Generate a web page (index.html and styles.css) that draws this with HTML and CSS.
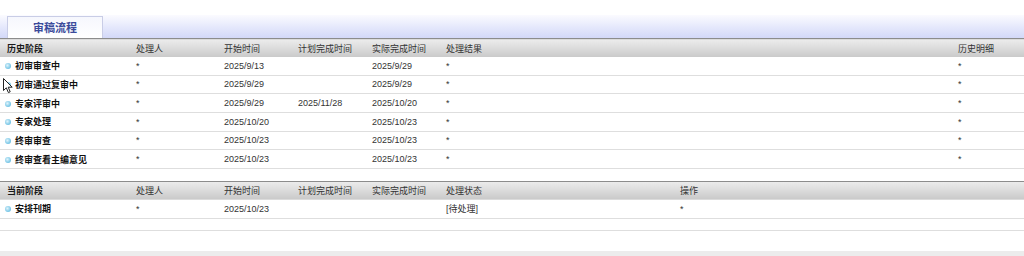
FILE: index.html
```html
<!DOCTYPE html>
<html lang="zh-CN">
<head>
    <meta charset="UTF-8">
    <title>审稿流程</title>
    <link rel="stylesheet" href="styles.css">
</head>
<body>
    <!-- 页签 -->
    <div class="tab-bar">
        <div class="tab">审稿流程</div>
    </div>

    <!-- 历史阶段 -->
    <table class="flow-table">
        <colgroup>
            <col style="width:136px"><col style="width:88px"><col style="width:74px"><col style="width:74px"><col style="width:74px"><col style="width:512px"><col>
        </colgroup>
        <thead>
            <tr>
                <th class="stage-head">历史阶段</th>
                <th>处理人</th>
                <th>开始时间</th>
                <th>计划完成时间</th>
                <th>实际完成时间</th>
                <th>处理结果</th>
                <th>历史明细</th>
            </tr>
        </thead>
        <tbody>
            <tr>
                <td class="stage"><span class="dot"></span>初审审查中</td>
                <td>*</td><td>2025/9/13</td><td></td><td>2025/9/29</td><td>*</td><td>*</td>
            </tr>
            <tr>
                <td class="stage"><span class="dot"></span>初审通过复审中</td>
                <td>*</td><td>2025/9/29</td><td></td><td>2025/9/29</td><td>*</td><td>*</td>
            </tr>
            <tr>
                <td class="stage"><span class="dot"></span>专家评审中</td>
                <td>*</td><td>2025/9/29</td><td>2025/11/28</td><td>2025/10/20</td><td>*</td><td>*</td>
            </tr>
            <tr>
                <td class="stage"><span class="dot"></span>专家处理</td>
                <td>*</td><td>2025/10/20</td><td></td><td>2025/10/23</td><td>*</td><td>*</td>
            </tr>
            <tr>
                <td class="stage"><span class="dot"></span>终审审查</td>
                <td>*</td><td>2025/10/23</td><td></td><td>2025/10/23</td><td>*</td><td>*</td>
            </tr>
            <tr>
                <td class="stage"><span class="dot"></span>终审查看主编意见</td>
                <td>*</td><td>2025/10/23</td><td></td><td>2025/10/23</td><td>*</td><td>*</td>
            </tr>
        </tbody>
    </table>

    <!-- 当前阶段 -->
    <table class="flow-table current">
        <colgroup>
            <col style="width:136px"><col style="width:88px"><col style="width:74px"><col style="width:74px"><col style="width:74px"><col style="width:234px"><col>
        </colgroup>
        <thead>
            <tr>
                <th class="stage-head">当前阶段</th>
                <th>处理人</th>
                <th>开始时间</th>
                <th>计划完成时间</th>
                <th>实际完成时间</th>
                <th>处理状态</th>
                <th>操作</th>
            </tr>
        </thead>
        <tbody>
            <tr>
                <td class="stage"><span class="dot"></span>安排刊期</td>
                <td>*</td><td>2025/10/23</td><td></td><td></td><td>[待处理]</td><td>*</td>
            </tr>
            <tr class="blank"><td colspan="7"></td></tr>
        </tbody>
    </table>

    <div class="footer-bar"></div>

    <!-- 鼠标指针 -->
    <svg class="pointer" width="11" height="16" viewBox="0 0 11 16">
        <path d="M0.5 0.5 L0.5 12.5 L3.3 9.8 L5.4 14.6 L7.2 13.8 L5.2 9.2 L9.2 9.2 Z" fill="#fff" stroke="#222" stroke-width="1"/>
    </svg>
</body>
</html>
```

FILE: styles.css
```css
body {
    margin: 0;
    background: #fff;
    font-family: "Liberation Sans", "Noto Sans CJK SC", sans-serif;
    font-size: 9px;
    color: #333;
    position: relative;
    height: 256px;
    overflow: hidden;
}

.tab-bar {
    margin-top: 15px;
    height: 23px;
    padding-left: 7px;
    background: linear-gradient(to bottom, #fbfbff 0%, #e6e9fc 50%, #d3d8f8 100%);
    display: flex;
    align-items: flex-end;
}

.tab {
    width: 94px;
    height: 21px;
    line-height: 21px;
    text-align: center;
    background: linear-gradient(to bottom, #f6f7fd, #ffffff);
    border: 1px solid #c9cde6;
    border-bottom: none;
    color: #3b4b9b;
    font-family: "Noto Sans CJK SC", sans-serif;
    font-size: 11px;
    font-weight: bold;
}

.flow-table {
    width: 100%;
    border-collapse: collapse;
    table-layout: fixed;
}

.flow-table th {
    height: 18px;
    padding: 0;
    text-align: left;
    font-weight: normal;
    color: #333;
    font-family: "Noto Sans CJK SC", sans-serif;
    background: linear-gradient(to bottom, #ececec, #c9c9c9);
    border-top: 1px solid #8c8c8c;
    white-space: nowrap;
}

.flow-table th.stage-head {
    padding-left: 7px;
    font-weight: bold;
    color: #1a1a1a;
}

.flow-table td {
    height: 17.67px;
    padding: 0;
    border-bottom: 1px solid #dedede;
    white-space: nowrap;
    color: #333;
}

.flow-table td.stage {
    padding-left: 5px;
    font-family: "Noto Sans CJK SC", sans-serif;
    font-weight: bold;
    color: #111;
}

.dot {
    display: inline-block;
    width: 6px;
    height: 6px;
    margin-right: 4px;
    border-radius: 50%;
    background: radial-gradient(circle at 40% 40%, #e2f4fb 0%, #86cdea 55%, #4eaed8 100%);
    vertical-align: 0;
}

.current {
    margin-top: 12px;
}

.current tr.blank td {
    height: 11px;
}

.footer-bar {
    position: absolute;
    left: 0;
    right: 0;
    bottom: 0;
    height: 5px;
    background: #ececec;
}

.pointer {
    position: absolute;
    left: 3px;
    top: 78px;
}
```
